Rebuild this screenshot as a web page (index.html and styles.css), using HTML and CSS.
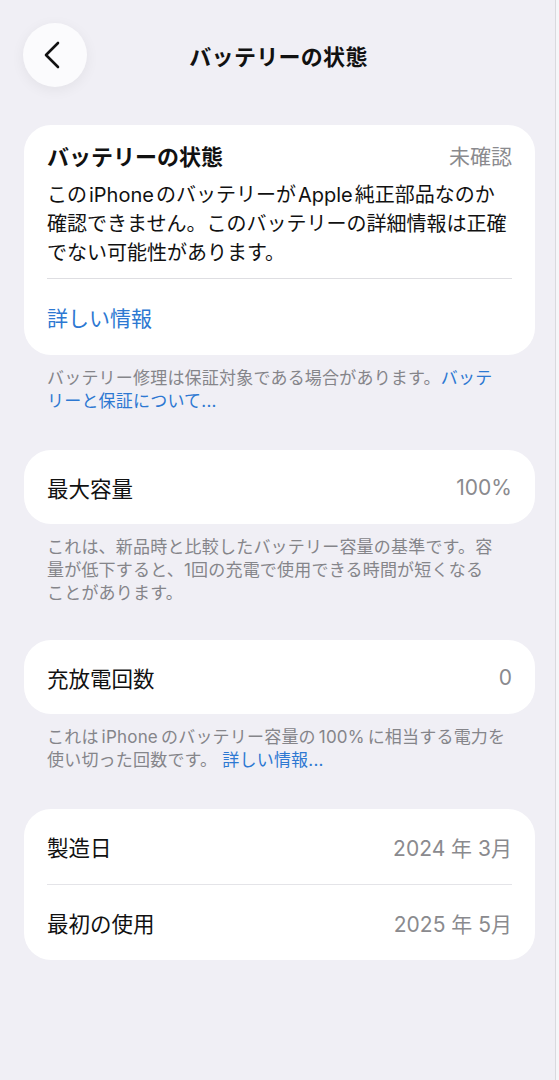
FILE: index.html
```html
<!DOCTYPE html>
<html lang="ja">
<head>
<meta charset="utf-8">
<title>バッテリーの状態</title>
<link rel="stylesheet" href="styles.css">
</head>
<body>
<div class="page">
  <header class="nav">
    <button class="back" aria-label="戻る">
      <svg width="20" height="28" viewBox="0 0 20 28" aria-hidden="true">
        <path d="M15 2 L3 14 L15 26" fill="none" stroke="#111" stroke-width="2.6" stroke-linecap="round" stroke-linejoin="round"/>
      </svg>
    </button>
    <h1 class="nav-title">バッテリーの状態</h1>
    <span class="nav-spacer"></span>
  </header>

  <section class="card card-first">
    <div class="health">
      <div class="health-head">
        <span class="health-title">バッテリーの状態</span>
        <span class="value">未確認</span>
      </div>
      <p class="health-text">この<span class="lat">iPhone</span>のバッテリーが<span class="lat">Apple</span>純正部品なのか<br>確認できません。このバッテリーの詳細情報は正確<br>でない可能性があります。</p>
    </div>
    <div class="row link-row"><span class="link">詳しい情報</span></div>
  </section>
  <p class="footnote">バッテリー修理は保証対象である場合があります。<span class="link">バッテ<br>リーと保証について...</span></p>

  <section class="card">
    <div class="row"><span class="label">最大容量</span><span class="value">100%</span></div>
  </section>
  <p class="footnote">これは、新品時と比較したバッテリー容量の基準です。容<br>量が低下すると、1回の充電で使用できる時間が短くなる<br>ことがあります。</p>

  <section class="card card-mid">
    <div class="row"><span class="label">充放電回数</span><span class="value">0</span></div>
  </section>
  <p class="footnote">これは<span class="lat-s">iPhone</span>のバッテリー容量の<span class="lat-s">100%</span>に相当する電力を<br>使い切った回数です。 <span class="link">詳しい情報...</span></p>

  <section class="card">
    <div class="row tall"><span class="label">製造日</span><span class="value">2024 年 3月</span></div>
    <div class="row tall"><span class="label">最初の使用</span><span class="value">2025 年 5月</span></div>
  </section>
</div>
</body>
</html>
```

FILE: styles.css
```css
html {
  background: #f6f6f9;
}
body {
  margin: 0;
  font-family: "Inter", "Noto Sans CJK JP", sans-serif;
  color: #111;
}
.page {
  width: 556px;
  min-height: 1080px;
  box-sizing: border-box;
  border-right: 1px solid #d9d9de;
  background: #f0eff5;
  padding: 23px 20px 40px 23px;
}
.nav {
  display: grid;
  grid-template-columns: 64px 1fr 64px;
  align-items: center;
  height: 64px;
  margin-right: 1px;
}
.back {
  width: 64px;
  height: 64px;
  border-radius: 50%;
  border: none;
  background: #fbfbfd;
  box-shadow: 0 3px 14px rgba(0, 0, 0, 0.06);
  display: flex;
  align-items: center;
  justify-content: center;
  padding: 0 4px 0 0;
}
.nav-title {
  margin: 0;
  text-align: center;
  font-size: 22px;
  font-weight: 700;
  letter-spacing: 0.3px;
}
.card {
  background: #fff;
  border-radius: 27px;
  margin: 37px 0 0 1px;
  padding: 0 23px;
}
.card-first {
  margin-top: 38px;
}
.card-mid {
  margin-top: 35px;
}
.health {
  padding: 14px 0 10px;
  border-bottom: 1px solid #dedee2;
}
.health-head {
  display: flex;
  justify-content: space-between;
  align-items: center;
  height: 32px;
}
.health-title {
  font-size: 22px;
  font-weight: 700;
}
.health-text {
  margin: 10px 0 0;
  font-size: 20px;
  line-height: 29px;
}
.lat {
  margin: 0 2px;
}
.lat-s {
  margin: 0 3px;
  letter-spacing: 0.2px;
}
.row {
  display: flex;
  justify-content: space-between;
  align-items: center;
  height: 74px;
  font-size: 21.5px;
}
.row.tall {
  height: 75px;
}
.row + .row {
  border-top: 1px solid #e4e4e8;
}
.link-row {
  font-size: 21px;
  height: 76px;
}
.value {
  color: #8a8a8e;
  font-size: 21px;
}
.link {
  color: #2d78d2;
}
.footnote {
  margin: 12px 0 0 24px;
  font-size: 17px;
  line-height: 23px;
  letter-spacing: 0.2px;
  color: #85858a;
}
.footnote .link {
  color: #2d78d2;
}
```
